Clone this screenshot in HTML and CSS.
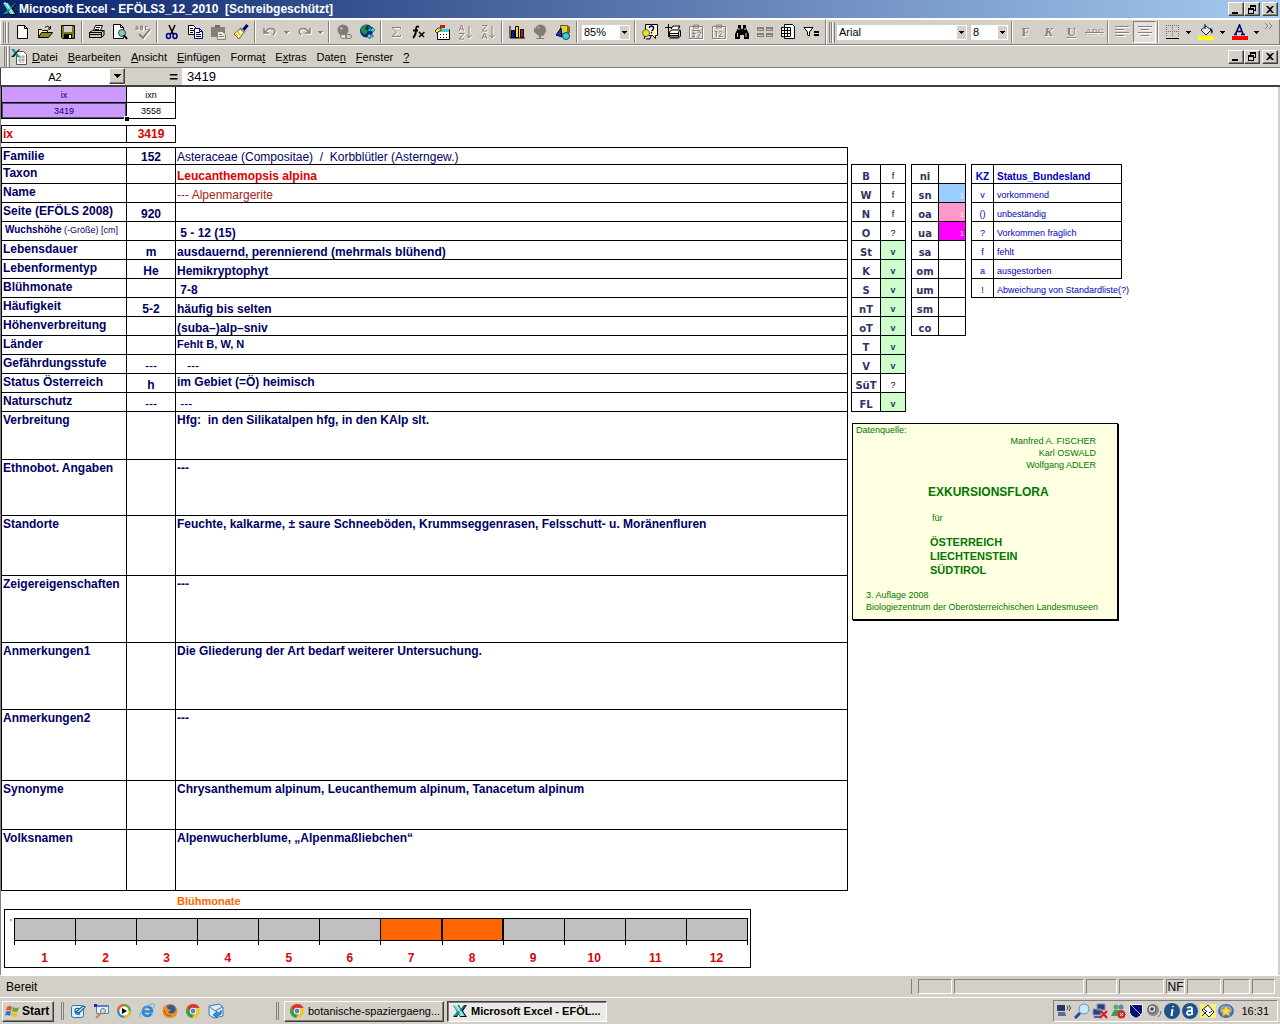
FILE: index.html
```html
<!DOCTYPE html>
<html lang="de">
<head>
<meta charset="utf-8">
<title>Microsoft Excel - EFÖLS3_12_2010 [Schreibgeschützt]</title>
<link rel="stylesheet" href="styles.css">
</head>
<body>
<svg class="defs" aria-hidden="true">
  <symbol id="excel" viewBox="0 0 16 16"><path d="M1 2h6l2 4 3-4h3l-4 6 4 6H8l-1-3-2 3H1l4-5z" fill="#012"/><path d="M1 2h5l7 11H8z" fill="#5ed8d0"/><path d="M13 2h1L5 13H1z" fill="#178c88"/><path d="M2 2h2l7 11" fill="none" stroke="#dff"/></symbol>
  <symbol id="caret" viewBox="0 0 5 3"><path d="M0 0h5v1H4v1H3v1H2V2H1V1H0z"/></symbol>
  <symbol id="min" viewBox="0 0 10 9"><path d="M1 7h6v2H1z"/></symbol>
  <symbol id="restore" viewBox="0 0 10 9"><path d="M3 0h6v6H7V5h1V2H4v1H3zM1 3h6v6H1zm1 2v3h4V5z" fill-rule="evenodd"/></symbol>
  <symbol id="close" viewBox="0 0 10 9"><path d="M1 1h2l2 2 2-2h2L6 4.500l3 3.500H7L5 6 3 8H1l3-3.500z"/></symbol>
  <symbol id="chrome" viewBox="0 0 16 16"><circle cx="8" cy="8" r="7" fill="#f4c430"/><path d="M2 4.500A7 7 0 0 1 14.500 5H8L5 9z" fill="#d8382c"/><path d="M2 4.500L6 11l3 .5L7 15A7 7 0 0 1 2 4.500z" fill="#3a9c48"/><circle cx="8" cy="8" r="3.200" fill="#fff"/><circle cx="8" cy="8" r="2.400" fill="#4a86d8"/></symbol>
</svg>

<header class="titlebar">
  <svg class="icon"><use href="#excel"/></svg>
  <h1>Microsoft Excel - EFÖLS3_12_2010&nbsp; [Schreibgeschützt]</h1>
  <div class="winbtns">
    <button aria-label="Minimieren"><svg><use href="#min"/></svg></button><button aria-label="Wiederherstellen"><svg><use href="#restore"/></svg></button><button class="x" aria-label="Schließen"><svg><use href="#close"/></svg></button>
  </div>
</header>

<div class="toolbars">
  <div class="toolbar">
    <i class="grip"></i>
    <button class="tb" aria-label="Neu"><svg class="icon"><path d="M3.500 1.500h7l3 3v10h-10z" fill="#fff" stroke="#000"/><path d="M10.500 1.500v3h3" fill="none" stroke="#000"/></svg></button>
    <button class="tb" aria-label="Öffnen"><svg class="icon"><path d="M1.500 13.500v-8h3l1 1h5v3" fill="#ffef80" stroke="#000"/><path d="M1.500 13.500l3-5h11l-4 5z" fill="#8c8a20" stroke="#000"/><path d="M8 3.500q3-3 5 1M13.500 2v3H11" fill="none" stroke="#000"/></svg></button>
    <button class="tb" aria-label="Speichern"><svg class="icon"><path d="M1.500 1.500h13v13h-12l-1-1z" fill="#7c7a18" stroke="#000"/><path d="M4 2h8v6H4z" fill="#d4d0c8"/><path d="M4 10h8v5H4z"/><path d="M9 11h2v3H9z" fill="#fff"/></svg></button>
    <i class="sep"></i>
    <button class="tb" aria-label="Drucken"><svg class="icon"><path d="M4.500 6.500l2-5h7l-2 5" fill="#fff" stroke="#000"/><path d="M7 3.500h4M6 5.500h4" stroke="#000"/><path d="M.5 8.500l3-2h11l-2 2v5H.5z" fill="#c8c5bd" stroke="#000"/><path d="M.5 8.500h12M15 6v5l-2 2" fill="none" stroke="#000"/><path d="M1 10.500h11" stroke="#000"/><path d="M8 11.500h3v1H8z" fill="#fd0"/></svg></button>
    <button class="tb" aria-label="Seitenansicht"><svg class="icon"><path d="M1.500.5h7l3 3v11h-10z" fill="#fff" stroke="#000"/><path d="M8.500.5v3h3" fill="none" stroke="#000"/><circle cx="10" cy="9" r="3.500" fill="#8cc8c8" stroke="#244"/><path d="M12 11l3 4" stroke="#000" stroke-width="2"/></svg></button>
    <button class="tb" aria-label="Rechtschreibung"><svg class="icon off"><path d="M1 6V3l1-1 1 1v3M1 4.500h2M5.500 6V2h2v4zM5.500 4h2M12.500 2.500h-2v3h2" fill="none"/><path d="M4 10l4 4 7-9" fill="none" stroke-width="2"/></svg></button>
    <i class="sep"></i>
    <button class="tb" aria-label="Ausschneiden"><svg class="icon"><path d="M5 1l4 9M11 1L7 10" stroke="#000" stroke-width="1.500"/><path d="M7 9l-2 1M9 9l2 1" stroke="#00007c"/><ellipse cx="4.500" cy="12" rx="2" ry="2.500" fill="none" stroke="#00007c" stroke-width="1.500"/><ellipse cx="11" cy="12" rx="2" ry="2.500" fill="none" stroke="#00007c" stroke-width="1.500"/></svg></button>
    <button class="tb" aria-label="Kopieren"><svg class="icon"><path d="M1.500 1.500h5l2 2v7h-7z" fill="#fff" stroke="#000"/><path d="M3 4.500h3M3 6.500h4M3 8.500h3" stroke="#000"/><path d="M7.500 4.500h5l3 3v7h-8z" fill="#fff" stroke="#00006c"/><path d="M9 8.500h4M9 10.500h5M9 12.500h5M12.500 4.500v3h3" stroke="#00006c" fill="none"/></svg></button>
    <button class="tb" aria-label="Einfügen"><svg class="icon"><path d="M1 3h14v10H1z" fill="#848078"/><path d="M5 1h5v3H5z" fill="#706c66"/><path d="M7.500 7.500h5l3 3v5h-8z" fill="#e8e6e0" stroke="#848078"/><path d="M9 10.500h3M9 12.500h5" stroke="#848078"/></svg></button>
    <button class="tb" aria-label="Format übertragen"><svg class="icon"><path d="M14.500 1l-5 6" stroke="#000060" stroke-width="3"/><path d="M1 10l6-5 4 3-5 7z" fill="#fff8a0" stroke="#706820"/><path d="M7 4l5 4" stroke="#888" stroke-width="2"/><path d="M3 10l2 2M5 8l2 3" stroke="#b8a000"/></svg></button>
    <i class="sep"></i>
    <button class="tb" aria-label="Rückgängig"><svg class="icon off"><path d="M2 4v5h5M3 8q4-5 8-3 4 2 0 6" fill="none" stroke-width="1.500"/></svg></button>
    <button class="drop off" aria-label="Rückgängig-Liste"><svg><use href="#caret"/></svg></button>
    <button class="tb" aria-label="Wiederholen"><svg class="icon off"><path d="M14 4v5H9M13 8Q9 3 5 5q-4 2 0 6" fill="none" stroke-width="1.500"/></svg></button>
    <button class="drop off" aria-label="Wiederholen-Liste"><svg><use href="#caret"/></svg></button>
    <i class="sep"></i>
    <button class="tb" aria-label="Hyperlink"><svg class="icon"><circle cx="7" cy="6" r="5.500" fill="#807c76"/><path d="M4 3l3 1-2 2z" fill="#d4d0c8"/><rect x="4.500" y="10.500" width="6" height="4" rx="2" fill="#e4e2dc" stroke="#77746e"/><rect x="9.500" y="10.500" width="6" height="4" rx="2" fill="none" stroke="#77746e"/></svg></button>
    <button class="tb" aria-label="Web"><svg class="icon"><circle cx="7.500" cy="7" r="6.500" fill="#0a2c78"/><path d="M2 5l3-4h3L6 5l3 2-3 4-4-3zM9 2l4 2-2 3z" fill="#1f9440"/><path d="M9 5h4V3l3 3-3 3V7H9zM14 11h-3V9l-3 3 3 3v-2h3z" fill="#3ee0e8" stroke="#003850" stroke-width=".6"/></svg></button>
    <i class="sep"></i>
    <button class="tb" aria-label="AutoSumme"><svg class="icon off"><path d="M12.500 5V3.500H4L8.500 8 4 12.500h8.500V11" fill="none"/></svg></button>
    <button class="tb" aria-label="Funktion"><svg class="icon"><path d="M8 3Q5 1 5 6t-3 8M2 6.500h5" fill="none" stroke="#000" stroke-width="1.800"/><path d="M8 8l5 5M13.500 8L8 13" stroke="#000" stroke-width="1.500"/></svg></button>
    <button class="tb" aria-label="Formelfeld"><svg class="icon"><path d="M3.500 5.500h12v10h-12z" fill="#fff" stroke="#000"/><path d="M4 5h11v3H4z" fill="#40d0d8"/><path d="M6 1h5v3H6z" fill="#c01818"/><path d="M1 7l3-3h3v2L3 9z" fill="#f0e040" stroke="#443c00"/><path d="M6 10h1v1H6zM9 10h1v1H9zM12 10h1v1h-1zM6 13h1v1H6zM9 13h1v1H9zM12 13h1v1h-1z"/></svg></button>
    <button class="tb" aria-label="Aufsteigend sortieren"><svg class="icon off"><path d="M2 7l2.500-6L7 7M3 5h3M2 9.500h5L2 15h5M12 2v12M9.500 11l2.500 3 2.500-3" fill="none"/></svg></button>
    <button class="tb" aria-label="Absteigend sortieren"><svg class="icon off"><path d="M2 1.500h5L2 7h5M2 15l2.500-6L7 15M3 13h3M12 2v12M9.500 11l2.500 3 2.500-3" fill="none"/></svg></button>
    <i class="sep"></i>
    <button class="tb" aria-label="Diagramm"><svg class="icon"><path d="M1 2v12h15" fill="none" stroke="#000"/><path d="M2.500 6.500h3v7h-3z" fill="#0820b0" stroke="#000"/><path d="M6.500 2.500h3v11h-3z" fill="#f0e020" stroke="#000"/><path d="M11.500 5.500h3v8h-3z" fill="#d01010" stroke="#000"/></svg></button>
    <button class="tb" aria-label="Karte"><svg class="icon"><circle cx="8.500" cy="6" r="5.500" fill="#807c76"/><path d="M2 4v4l5 4v2H4v1h8v-1H9v-2l4-1" fill="#807c76"/><path d="M5 2l3 1-2 2z" fill="#aaa69e"/></svg></button>
    <button class="tb" aria-label="Zeichnen"><svg class="icon"><path d="M5.500 1.500h7v8h-7z" fill="#e0d040" stroke="#665c00"/><path d="M12 1l3 2v6l-3 1z" fill="#806c00"/><path d="M1 11l5-7 1 9z" fill="#1038b8" stroke="#002"/><circle cx="11" cy="12" r="3.500" fill="#38d0e0" stroke="#146"/></svg></button>
    <i class="sep"></i>
    <select class="zoom" aria-label="Zoom"><option>85%</option></select>
    <i class="sep"></i>
    <button class="tb" aria-label="Hilfe"><svg class="icon"><path d="M3.500.5h12v11h-2v3l-3-3h-7z" fill="#fffac0" stroke="#000"/><path d="M7.500 4q0-2 2-2t2 2-2 3M9.500 8v1.500" fill="none" stroke="#000070" stroke-width="1.500"/><circle cx="4" cy="9" r="3.500" fill="#f0e020" stroke="#665"/><path d="M3 12l-1 3M9 12l-1 3H4" stroke="#000" fill="none"/></svg></button>
    <button class="tb" aria-label="Druckbereich"><svg class="icon"><path d="M3.500 0v13M0 3.500h15" stroke="#000"/><path d="M6 5l2-3h7l-2 3M4.500 8l2-2h9l-2 2v5h-9z" fill="#fff" stroke="#000"/><path d="M5 9.500h9M5 11.500h9M15.500 7v5l-2 2h-9" fill="none" stroke="#000"/></svg></button>
    <button class="tb" aria-label="Aufgabe"><svg class="icon off"><path d="M1.500 2.500h13v12h-13zM5.500 4V1h5v3zM4 6.500h8M4 9.500h4M4 12.500h3M9 8h4l-3 6M6 6v8" fill="none"/></svg></button>
    <button class="tb" aria-label="Kalender"><svg class="icon off"><path d="M1.500 2.500h13v12h-13zM5.500 4V1h5v3zM5.500 7v6M4 8l1-1M8 8.500l1.500-1.500L11 8.500 8 12.500h4" fill="none"/></svg></button>
    <button class="tb" aria-label="Suchen"><svg class="icon"><path d="M4 1h3v3l1 2 1-2V1h3v3l3 6v5h-5v-4H6v4H1v-5l3-6z"/><path d="M3.500 9v4M5 4v2M11 4v2M12 9v4" stroke="#fff" stroke-width=".8"/></svg></button>
    <button class="tb" aria-label="Fenster teilen"><svg class="icon"><path d="M0 3h7v4H0zM9 3h7v4H9zM0 9h7v4H0zM9 9h7v4H9z" fill="#85817a"/><path d="M1 5.500h5M10 5.500h5M1 11.500h5M10 11.500h5" stroke="#c8c4bc"/></svg></button>
    <button class="tb" aria-label="Tabelle"><svg class="icon"><path d="M4.500.5h8l2 2v12h-10z" fill="#fff" stroke="#000"/><path d="M1.500 3.500h9v9h-9zM1 6.500h10M1 9.500h10M4.500 3v10M7.500 3v10" fill="#fff" stroke="#000"/></svg></button>
    <button class="tb" aria-label="AutoFilter"><svg class="icon"><path d="M1 3.500h9L6.500 8v4l-2-1V8z" fill="#fff" stroke="#000"/><path d="M11 7h5v2h-5zM11 10h5v2h-5z"/></svg></button>
  </div>
  <div class="toolbar format">
    <i class="grip"></i>
    <select class="font" aria-label="Schriftart"><option>Arial</option></select>
    <select class="size" aria-label="Schriftgrad"><option>8</option></select>
    <i class="sep"></i>
    <button class="tb ltr">F</button><button class="tb ltr it">K</button><button class="tb ltr un">U</button><button class="tb ltr st">ABC</button>
    <i class="sep"></i>
    <button class="tb" aria-label="Linksbündig"><svg class="icon off"><path d="M1 2.500h14M1 5.500h9M1 8.500h14M1 11.500h9" fill="none"/></svg></button>
    <button class="tb pressed" aria-label="Zentriert"><svg class="icon off"><path d="M1 2.500h14M4 5.500h8M1 8.500h14M4 11.500h8" fill="none"/></svg></button>
    <i class="sep"></i>
    <button class="tb" aria-label="Rahmen"><svg class="icon"><path d="M2.500 1v11M8.500 1v11M14.500 1v11M2 1.500h13M2 7.500h13" stroke="#77736c" stroke-dasharray="1 1"/><path d="M2 14.500h13" stroke="#000"/></svg></button>
    <button class="drop" aria-label="Rahmenliste"><svg><use href="#caret"/></svg></button>
    <button class="tb" aria-label="Füllfarbe"><svg class="icon"><path d="M3 6l5-4 5 4-5 5z" fill="#e8e8e8" stroke="#223"/><path d="M7 5V0" stroke="#000"/><path d="M12 4q4 1 2 6l-2-4z" fill="#000060"/><path d="M0 12h16v4H0z" fill="#ff0"/></svg></button>
    <button class="drop" aria-label="Füllfarbenliste"><svg><use href="#caret"/></svg></button>
    <button class="tb" aria-label="Schriftfarbe"><svg class="icon"><path d="M2 10.500h3M9 10.500h4M3.500 10L7.500 1l3.500 9M5 7.500h5" fill="none" stroke="#000068" stroke-width="1.600"/><path d="M0 12h16v4H0z" fill="red"/></svg></button>
    <button class="drop" aria-label="Schriftfarbenliste"><svg><use href="#caret"/></svg></button>
    <svg class="more" aria-hidden="true"><path d="M1 1l3 3-3 3M5 1l3 3-3 3" fill="none" stroke="#85817a"/></svg>
  </div>
</div>

<nav class="menubar" aria-label="Menü">
  <i class="grip"></i>
  <svg class="icon"><path d="M5.500 2.500h7l3 3v10h-10z" fill="#fff" stroke="#555"/><path d="M7 8h7M7 11h7M9 6v8M12 6v8" stroke="#999"/><path d="M0 0h3l6 8H6z" fill="#189890"/><path d="M8 0h1L3 8H0z" fill="#024"/></svg>
  <button><u>D</u>atei</button><button><u>B</u>earbeiten</button><button><u>A</u>nsicht</button><button><u>E</u>infügen</button><button>Forma<u>t</u></button><button>E<u>x</u>tras</button><button>Date<u>n</u></button><button><u>F</u>enster</button><button><u>?</u></button>
  <div class="winbtns">
    <button aria-label="Minimieren"><svg><use href="#min"/></svg></button><button aria-label="Wiederherstellen"><svg><use href="#restore"/></svg></button><button class="x" aria-label="Schließen"><svg><use href="#close"/></svg></button>
  </div>
</nav>

<div class="formulabar">
  <input class="namebox" aria-label="Namenfeld" value="A2">
  <button class="namedrop" aria-label="Namenliste"><svg viewBox="0 0 7 4"><path d="M0 0h7v1H6v1H5v1H4v1H3V3H2V2H1V1H0z"/></svg></button>
  <button class="equals">=</button>
  <input class="formula" aria-label="Formel" value="3419">
</div>

<main class="sheet">
  <section class="record">
    <table class="keys">
      <tr><td class="lilac">ix</td><td>ixn</td></tr>
      <tr><td class="lilac active">3419</td><td>3558</td></tr>
    </table>
    <table class="current">
      <tr><th>ix</th><td>3419</td></tr>
    </table>
    <table class="data">
      <colgroup><col class="c1"><col class="c2"><col></colgroup>
      <tr class="first"><th>Familie</th><td>152</td><td class="plain">Asteraceae (Compositae)  /  Korbblütler (Asterngew.)</td></tr>
      <tr><th>Taxon</th><td></td><td class="red">Leucanthemopsis alpina</td></tr>
      <tr><th>Name</th><td></td><td class="plain brown">--- Alpenmargerite</td></tr>
      <tr><th>Seite (EFÖLS 2008)</th><td>920</td><td></td></tr>
      <tr><th class="tiny"><b>Wuchshöhe</b> (-Größe) [cm]</th><td></td><td> 5 - 12 (15)</td></tr>
      <tr><th>Lebensdauer</th><td>m</td><td>ausdauernd, perennierend (mehrmals blühend)</td></tr>
      <tr><th>Lebenformentyp</th><td>He</td><td>Hemikryptophyt</td></tr>
      <tr><th>Blühmonate</th><td></td><td> 7-8</td></tr>
      <tr><th>Häufigkeit</th><td>5-2</td><td>häufig bis selten</td></tr>
      <tr><th>Höhenverbreitung</th><td></td><td>(suba–)alp–sniv</td></tr>
      <tr><th>Länder</th><td></td><td class="top small">Fehlt B, W, N</td></tr>
      <tr><th>Gefährdungsstufe</th><td class="plain">---</td><td class="plain">   ---</td></tr>
      <tr><th>Status Österreich</th><td>h</td><td class="top">im Gebiet (=Ö) heimisch</td></tr>
      <tr><th>Naturschutz</th><td class="plain">---</td><td class="plain"> ---</td></tr>
      <tr class="h48"><th>Verbreitung</th><td></td><td class="top">Hfg:  in den Silikatalpen hfg, in den KAlp slt.</td></tr>
      <tr class="h56"><th>Ethnobot. Angaben</th><td></td><td class="top">---</td></tr>
      <tr class="h60"><th>Standorte</th><td></td><td class="top">Feuchte, kalkarme, ± saure Schneeböden, Krummseggenrasen, Felsschutt- u. Moränenfluren</td></tr>
      <tr class="h67"><th>Zeigereigenschaften</th><td></td><td class="top">---</td></tr>
      <tr class="h67"><th>Anmerkungen1</th><td></td><td class="top">Die Gliederung der Art bedarf weiterer Untersuchung.</td></tr>
      <tr class="h71"><th>Anmerkungen2</th><td></td><td class="top">---</td></tr>
      <tr class="h49"><th>Synonyme</th><td></td><td class="top">Chrysanthemum alpinum, Leucanthemum alpinum, Tanacetum alpinum</td></tr>
      <tr class="h61"><th>Volksnamen</th><td></td><td class="top">Alpenwucherblume, „Alpenmaßliebchen“</td></tr>
    </table>
    <h2>Blühmonate</h2>
    <div class="chart">
      <span class="mark">'</span>
      <ol>
        <li>1</li><li>2</li><li>3</li><li>4</li><li>5</li><li>6</li><li class="on">7</li><li class="on">8</li><li>9</li><li>10</li><li>11</li><li>12</li>
      </ol>
    </div>
  </section>

  <aside class="side">
    <div class="codes">
      <table class="lands">
        <tr><th>B</th><td>f</td></tr>
        <tr><th>W</th><td>f</td></tr>
        <tr><th>N</th><td>f</td></tr>
        <tr><th>O</th><td>?</td></tr>
        <tr><th>St</th><td class="yes">v</td></tr>
        <tr><th>K</th><td class="yes">v</td></tr>
        <tr><th>S</th><td class="yes">v</td></tr>
        <tr><th>nT</th><td class="yes">v</td></tr>
        <tr><th>oT</th><td class="yes">v</td></tr>
        <tr><th>T</th><td class="yes">v</td></tr>
        <tr><th>V</th><td class="yes">v</td></tr>
        <tr><th>SüT</th><td>?</td></tr>
        <tr><th>FL</th><td class="yes">v</td></tr>
      </table>
      <table class="levels">
        <tr><th>ni</th><td></td></tr>
        <tr><th>sn</th><td class="sky">1</td></tr>
        <tr><th>oa</th><td class="pink">1</td></tr>
        <tr><th>ua</th><td class="magenta">1</td></tr>
        <tr><th>sa</th><td></td></tr>
        <tr><th>om</th><td></td></tr>
        <tr><th>um</th><td></td></tr>
        <tr><th>sm</th><td></td></tr>
        <tr><th>co</th><td></td></tr>
      </table>
      <table class="legend">
        <tr><th>KZ</th><th>Status_Bundesland</th></tr>
        <tr><td>v</td><td>vorkommend</td></tr>
        <tr><td>()</td><td>unbeständig</td></tr>
        <tr><td>?</td><td>Vorkommen fraglich</td></tr>
        <tr><td>f</td><td>fehlt</td></tr>
        <tr><td>a</td><td>ausgestorben</td></tr>
        <tr><td>!</td><td class="open">Abweichung von Standardliste(?)</td></tr>
      </table>
    </div>
    <div class="source">
      <p>Datenquelle:</p>
      <p class="authors">Manfred A. FISCHER<br>Karl OSWALD<br>Wolfgang ADLER</p>
      <h3>EXKURSIONSFLORA</h3>
      <p class="for">für</p>
      <p class="areas">ÖSTERREICH<br>LIECHTENSTEIN<br>SÜDTIROL</p>
      <p class="edition">3. Auflage 2008<br>Biologiezentrum der Oberösterreichischen Landesmuseen</p>
    </div>
  </aside>
</main>

<footer class="statusbar">
  <span>Bereit</span>
  <div class="panes"><i class="w34"></i><i class="w130"></i><i class="w31"></i><i class="w45"></i><i class="nf">NF</i><i class="w34"></i><i class="w27"></i><i class="w23"></i></div>
</footer>

<div class="taskbar">
  <button class="start"><svg class="icon"><path d="M2 4q3-2 5 0L6 8q-3-2-5 0z" fill="#e85020"/><path d="M8 4q3 2 6 0l-1 4q-3 2-6 0z" fill="#60b030"/><path d="M1 9q3-2 5 0l-1 4q-3-2-5 0z" fill="#3070d8"/><path d="M7 9q3 2 6 0l-1 4q-3 2-6 0z" fill="#f0c020"/></svg>Start</button>
  <i class="grip"></i>
  <div class="quick">
    <a href="#" aria-label="Desktop"><svg class="icon"><rect x="1.500" y="2.500" width="12" height="12" rx="2" fill="#dff0fc" stroke="#2878b8"/><path d="M10 6q-5-2-5 2t5 3M6 9l7-6 2 1-6 6z" fill="#fff" stroke="#1868a8" stroke-width="1.300"/></svg></a>
    <a href="#" aria-label="Suche"><svg class="icon"><path d="M3.500 2.500h12v8h-12z" fill="#e8f0fc" stroke="#5080c0"/><path d="M3 2h13v2H3z" fill="#5080d0"/><circle cx="10" cy="8" r="2.500" fill="#c8e0f8" stroke="#777"/><path d="M8 10l-5 5" stroke="#c08050" stroke-width="2"/><path d="M1 1h3v3H1z" fill="#1c2c98"/></svg></a>
    <a href="#" aria-label="Media Player"><svg class="icon"><circle cx="8" cy="8" r="7" fill="#3888d0"/><path d="M8 1a7 7 0 0 0-7 7h7z" fill="#e86820"/><path d="M8 1a7 7 0 0 1 7 7H8z" fill="#60b040"/><path d="M15 8a7 7 0 0 1-7 7V8z" fill="#f0b820"/><circle cx="8" cy="8" r="4.600" fill="#fff"/><path d="M6 5l5 3-5 3z"/></svg></a>
    <a href="#" aria-label="Internet Explorer"><svg class="icon"><path d="M12.500 10.500Q10 14 6.500 12.500T4 7q2-4 5.500-3t3.500 4.500H5" fill="none" stroke="#2888d8" stroke-width="2.600"/><path d="M1 14Q0 10 6 5t9-4q2 1-1 4" fill="none" stroke="#60b0e8"/></svg></a>
    <a href="#" aria-label="Firefox"><svg class="icon"><circle cx="8" cy="8" r="7" fill="#e07018"/><circle cx="9" cy="6.500" r="4.500" fill="#2c5ca0"/><path d="M1 4q4-1 5 2l3 1-3 2q2 3 6 1 3-2 3-6 2 11-7 11T1 4z" fill="#f09020"/><path d="M2 7q1 6 7 6" fill="none" stroke="#b83c10"/></svg></a>
    <a href="#" aria-label="Chrome"><svg class="icon"><use href="#chrome"/></svg></a>
    <a href="#" aria-label="Outlook Express"><svg class="icon"><path d="M1 3l10-2 4 3v9l-9 2-5-3z" fill="#d8ecfc" stroke="#3878c0"/><path d="M2 4l5 4 7-4" fill="none" stroke="#3878c0"/><path d="M5 12l4-4v2q4 0 4-3 2 5-4 6v2z" fill="#3090e0" stroke="#185090" stroke-width=".6"/></svg></a>
  </div>
  <i class="grip tasks"></i>
  <button class="task"><svg class="icon"><use href="#chrome"/></svg>botanische-spaziergaeng...</button>
  <button class="task current-task"><svg class="icon"><use href="#excel"/></svg>Microsoft Excel - EFÖL...</button>
  <div class="tray">
    <svg class="icon"><path d="M1 2h8v6H1z" fill="#283868"/><path d="M2 9h7l1 4H2z" fill="#5868a0"/><path d="M11 3q2 2 0 4M13 2q3 3 0 6" fill="none" stroke="#444"/></svg>
    <svg class="icon"><circle cx="10" cy="6" r="5" fill="#c8e8fc" stroke="#6890b8"/><path d="M6 10l-5 5" stroke="#1848b0" stroke-width="3"/></svg>
    <svg class="icon"><path d="M5 1h8v6H5zM1 6h8v6H1z" fill="#303c78" stroke="#8898c8"/><path d="M2 13h7v2H2z" fill="#5060a0"/><path d="M9 8l6 7M15 8l-7 7" stroke="#e01818" stroke-width="2"/></svg>
    <svg class="icon"><circle cx="6" cy="4" r="2.500" fill="#58a868"/><circle cx="11" cy="4" r="2.500" fill="#5888b0"/><path d="M1 13l3-6h5l2 6z" fill="#489858"/><path d="M9 7h4l2 4H9z" fill="#4878a8"/><circle cx="11.500" cy="11.500" r="4" fill="#d82820"/><path d="M10 10l3 3M13 10l-3 3" stroke="#fff"/></svg>
    <svg class="icon"><path d="M1.500 1.500h13v8q-1 4-6.500 6-5.500-2-6.500-6z" fill="#081078" stroke="#fff"/><path d="M3 2l10 10" stroke="#a8b0e0"/></svg>
    <svg class="icon"><circle cx="7" cy="7" r="6" fill="#888"/><circle cx="6" cy="6" r="4" fill="#ddd" stroke="#555"/><circle cx="6" cy="6" r="1.800" fill="#444"/><path d="M12 14q3-2 3-6" fill="none" stroke="#668"/></svg>
    <svg class="icon"><circle cx="8" cy="8" r="8" fill="#1c5488"/><path d="M9 3v1M8.500 6l-1 7" stroke="#fff" stroke-width="2"/></svg>
    <svg class="icon"><circle cx="8" cy="8" r="8" fill="#1c5488"/><path d="M5 5q5-2 5 1v6M10 8q-5-1-5 2t5 1" fill="none" stroke="#fff" stroke-width="1.800"/></svg>
    <svg class="icon"><path d="M0 1h16v14H0z" fill="#f4f080"/><path d="M2 7l6-5 6 7-5 5z" fill="#fff" stroke="#222"/><path d="M4 6l3 3M2 13l4-4M9 10l3-2" stroke="#222"/></svg>
    <svg class="icon"><ellipse cx="8" cy="8" rx="8" ry="7" fill="#3c70c8"/><ellipse cx="8" cy="7" rx="6" ry="4.500" fill="#88b0e8"/><path d="M8 2l2 4 4 .5-3 3 1 4-4-2-4 2 1-4-3-3L6 6z" fill="#fcd840" stroke="#a87008" stroke-width=".6"/></svg>
    <time>16:31</time>
  </div>
</div>
</body>
</html>
```

FILE: styles.css
```css
:root {
  --face: #d4d0c8;
  --shade: #808080;
  --dark: #404040;
  --navy: #000066;
}

*, *::before, *::after { box-sizing: border-box; }

body {
  margin: 0;
  min-height: 100vh;
  display: flex;
  flex-direction: column;
  background: var(--face);
  font: 11px/14px "Liberation Sans", Arial, sans-serif;
  color: #000;
}

h1, h2, h3, p, ol { margin: 0; padding: 0; font-size: inherit; }
button { font: inherit; color: inherit; padding: 0; border: 0; background: none; }
input, select { font: inherit; color: inherit; border: 0; margin: 0; border-radius: 0; }
.defs { position: absolute; width: 0; height: 0; }
.icon { width: 16px; height: 16px; flex: none; display: block; }
.off { stroke: #85817a; filter: drop-shadow(1px 1px 0 #fff); }

/* title bar and window buttons */
.titlebar {
  display: flex;
  align-items: center;
  height: 18px;
  padding: 0 2px;
  gap: 1px;
  background: linear-gradient(90deg, #0a246a, #a6caf0);
  color: #fff;
}
.titlebar h1 { font: bold 12px/16px "Liberation Sans", Arial, sans-serif; white-space: nowrap; }
.winbtns { display: flex; margin-left: auto; }
.winbtns button, .namedrop {
  display: flex;
  align-items: center;
  justify-content: center;
  width: 16px;
  height: 14px;
  background: var(--face);
  border: 1px solid;
  border-color: #fff var(--dark) var(--dark) #fff;
  box-shadow: inset -1px -1px 0 var(--shade);
}
.winbtns svg { width: 10px; height: 9px; }
.winbtns .x { margin-left: 2px; }

/* toolbars */
.toolbars { display: flex; height: 27px; border-top: 1px solid #fff; }
.toolbar {
  display: flex;
  align-items: center;
  flex: none;
  padding: 0 3px 0 2px;
  border: 1px solid;
  border-color: #fff var(--shade) var(--shade) #fff;
}
.format { flex: 1; padding-right: 0; }
.grip {
  flex: none;
  width: 6px;
  height: 21px;
  margin-right: 1px;
  border: solid;
  border-width: 0 1px;
  border-color: #fff var(--shade);
  background: linear-gradient(90deg, var(--face) 1px, var(--shade) 1px 2px, #fff 2px 3px, var(--face) 3px);
}
.tb { display: flex; align-items: center; justify-content: center; flex: none; width: 23px; height: 22px; }
.sep {
  flex: none;
  width: 2px;
  height: 22px;
  margin: 0 2px;
  border-left: 1px solid var(--shade);
  border-right: 1px solid #fff;
}
.format .sep { margin: 0 1px; }
.drop { display: flex; justify-content: center; flex: none; width: 11px; }
.drop svg { width: 5px; height: 3px; }
.drop.off { fill: #85817a; stroke: none; }
.toolbar select {
  appearance: none;
  flex: none;
  height: 15px;
  padding: 0 14px 0 2px;
  background: #fff url("data:image/svg+xml,%3Csvg xmlns='http://www.w3.org/2000/svg' width='11' height='15'%3E%3Cpath fill='%23d4d0c8' d='M1 1h9v13H1z'/%3E%3Cpath d='M3 6h5v1H7v1H6v1H5V8H4V7H3z'/%3E%3C/svg%3E") right center no-repeat;
}
.toolbar .zoom { width: 48px; margin: 0 2px; }
.toolbar .font { width: 130px; margin: 0 4px 0 1px; }
.toolbar .size { width: 37px; margin-right: 2px; }
.ltr { font: bold 13px/16px "Liberation Serif", serif; color: #85817a; text-shadow: 1px 1px 0 #fff; }
.it { font-style: italic; }
.un { text-decoration: underline; }
.st { font: 9px/12px "Liberation Serif", serif; text-decoration: line-through; }
.pressed { border: 1px solid; border-color: var(--shade) #fff #fff var(--shade); background: #e4e1dc; }
.more { align-self: flex-start; flex: none; width: 9px; height: 9px; margin: 2px 0 0 2px; }

/* menu bar */
.menubar {
  display: flex;
  align-items: center;
  height: 23px;
  padding: 0 2px 0 4px;
  border-top: 1px solid #fff;
  border-bottom: 1px solid var(--shade);
}
.menubar > button { padding: 0 5px; line-height: 16px; }

/* formula bar */
.formulabar {
  display: flex;
  height: 19px;
  background: #fff;
  border-bottom: 2px solid var(--dark);
  border-left: 1px solid var(--dark);
}
.namebox { width: 108px; text-align: center; background: #fff; padding: 0; }
.namedrop { height: 16px; }
.namedrop svg { width: 7px; height: 4px; }
.equals { width: 57px; padding-right: 4px; text-align: right; font-weight: bold; font-size: 15px; background: var(--face); }
.formula { flex: 1; padding: 0 5px; font-size: 13px; background: #fff; }

/* worksheet */
.sheet {
  flex: 1;
  display: flex;
  align-items: flex-start;
  gap: 3px;
  margin-right: 2px;
  padding-bottom: 7px;
  background: #fff;
  border-left: 1px solid var(--shade);
  color: var(--navy);
}
.record { flex: none; width: 847px; }
table { border-spacing: 0; table-layout: fixed; border: solid #000; border-width: 1px 0 0 1px; }
th, td { height: 19px; padding: 0 1px; border: solid #000; border-width: 0 1px 1px 0; white-space: pre; }

.keys, .current { width: 175px; text-align: center; }
.keys { border-top: 0; }
.keys td { height: 16px; font-size: 9px; line-height: 12px; color: #000; }
.keys td:first-child, .current th { width: 125px; }
.keys td.lilac { background: #c9f; color: var(--navy); }
.keys .active { position: relative; box-shadow: inset 0 0 0 1px #5a4a6a; }
.active::after {
  content: "";
  position: absolute;
  right: -3px;
  bottom: -3px;
  width: 5px;
  height: 5px;
  background: #000;
  border: solid #fff;
  border-width: 1px 0 0 1px;
}
.current { margin: 6px 0 4px; font-size: 12px; font-weight: bold; color: #d00; }
.current th, .current td { height: 17px; line-height: 14px; }
.current th { text-align: left; }

.data { width: 100%; font-size: 12px; font-weight: bold; }
.c1 { width: 125px; }
.c2 { width: 49px; }
.data th { text-align: left; vertical-align: top; line-height: 16px; }
.data td { vertical-align: bottom; line-height: 13px; }
.data td:nth-child(2) { text-align: center; }
.data .first > * { height: 17px; }
.data td.top { vertical-align: top; line-height: 17px; }
.data td.small { font-size: 11px; }
.data .plain { font-weight: normal; }
.data .red { color: #d00; }
.data .brown { color: #a22; }
.data th.tiny { padding-left: 3px; font-size: 9px; font-weight: normal; }
.data .tiny b { font-size: 10px; }
.data .h48 > * { height: 48px; }
.data .h56 > * { height: 56px; }
.data .h60 > * { height: 60px; }
.data .h67 > * { height: 67px; }
.data .h71 > * { height: 71px; }
.data .h49 > * { height: 49px; }
.data .h61 > * { height: 61px; }

/* flowering calendar */
.record h2 { padding: 3px 0 0 176px; line-height: 15px; color: #f60; }
.chart { display: flex; width: 747px; margin-left: 3px; padding: 8px 2px 0 5px; border: 1px solid #000; }
.mark { width: 4px; font-size: 9px; line-height: 9px; color: #000; }
.chart ol { display: flex; flex: 1; height: 27px; margin-bottom: 22px; border-right: 1px solid #000; list-style: none; }
.chart li {
  flex: 1;
  height: 49px;
  background: linear-gradient(#000, #000) 0 0 / 1px 27px no-repeat;
  font: bold 12px/14px "Liberation Sans", Arial, sans-serif;
  color: #d00;
  text-align: center;
}
.chart li::before {
  content: "";
  display: block;
  height: 23px;
  margin-bottom: 10px;
  border: solid #000;
  border-width: 1px 0 1px 1px;
  background: silver;
}
.chart .on::before { background: #f60; border-right-width: 1px; }

/* code tables right of the record */
.side { padding-top: 77px; }
.codes { display: flex; align-items: flex-start; gap: 5px; }
.codes th, .codes td { vertical-align: bottom; text-align: center; line-height: 13px; font-size: 9px; }
.codes th { font: bold 10px/13px "DejaVu Sans", sans-serif; color: #336; }
.lands { width: 55px; }
.lands th { width: 29px; }
.lands td { color: #000; }
.lands .yes { background: #cfc; color: #336; font-weight: bold; }
.levels { width: 55px; }
.levels th { width: 27px; }
.codes .levels td { color: #fff; text-align: right; font-size: 7px; }
.sky { background: #9cf; }
.pink { background: #f9c; }
.magenta { background: #f0f; }
.legend { width: 151px; }
.codes .legend th { font: bold 10px/13px "Liberation Sans", Arial, sans-serif; color: #00b; }
.codes .legend td { color: #00b; }
.legend tr > :first-child { width: 22px; }
.codes .legend tr > :last-child { text-align: left; padding-left: 3px; }
.legend .open { border-right-color: transparent; }

.source {
  width: 266px;
  margin: 11px 0 0 1px;
  padding: 1px 3px 6px;
  border: 1px solid #000;
  box-shadow: 1px 1px 0 #000;
  background: #ffffe1;
  color: #070;
  font-size: 9px;
  line-height: 12px;
}
.source p:first-child { line-height: 10px; }
.source .authors { padding-right: 18px; text-align: right; }
.source h3 { margin: 13px 0 12px 72px; font-size: 12px; line-height: 16px; }
.source .for { padding-left: 76px; }
.source .areas { margin: 11px 0 12px; padding-left: 74px; font-size: 11px; font-weight: bold; line-height: 14px; }
.source .edition { padding-left: 10px; }

/* status bar */
.statusbar {
  display: flex;
  align-items: center;
  height: 22px;
  padding: 0 5px 0 6px;
  border-top: 1px solid #fff;
  font-size: 12px;
}
.panes { display: flex; gap: 2px; margin-left: auto; padding-left: 6px; border-left: 1px solid var(--shade); }
.panes i { height: 15px; border: 1px solid; border-color: var(--shade) #fff #fff var(--shade); font-style: normal; line-height: 14px; }
.w23 { width: 23px; }
.w27 { width: 27px; }
.w31 { width: 31px; }
.w34 { width: 34px; }
.w45 { width: 45px; }
.w130 { width: 130px; }
.nf { width: 19px; text-align: center; }

/* task bar */
.taskbar { display: flex; align-items: center; height: 27px; padding: 0 2px; border-top: 1px solid #fff; }
.start, .task {
  display: flex;
  align-items: center;
  height: 21px;
  border: 1px solid;
  border-color: #fff var(--dark) var(--dark) #fff;
  box-shadow: inset -1px -1px 0 var(--shade);
  white-space: nowrap;
}
.start { flex: none; width: 52px; gap: 1px; padding-left: 2px; font-weight: bold; font-size: 12px; }
.taskbar .grip { width: 3px; height: 18px; margin: 0 6px 0 7px; background: var(--face); border-width: 0 1px; }
.taskbar .tasks { margin: 0 5px 0 52px; }
.quick { display: flex; gap: 7px; }
.task { flex: 0 1 160px; gap: 3px; padding: 0 4px; overflow: hidden; }
.current-task {
  margin-left: 3px;
  font-weight: bold;
  background: #eceae6;
  border-color: var(--dark) #fff #fff var(--dark);
  box-shadow: inset 1px 1px 0 var(--shade);
}
.tray {
  display: flex;
  align-items: center;
  gap: 2px;
  height: 22px;
  margin-left: auto;
  padding: 0 8px 0 2px;
  border: 1px solid;
  border-color: var(--shade) #fff #fff var(--shade);
}
.tray time { padding-left: 5px; }
```
